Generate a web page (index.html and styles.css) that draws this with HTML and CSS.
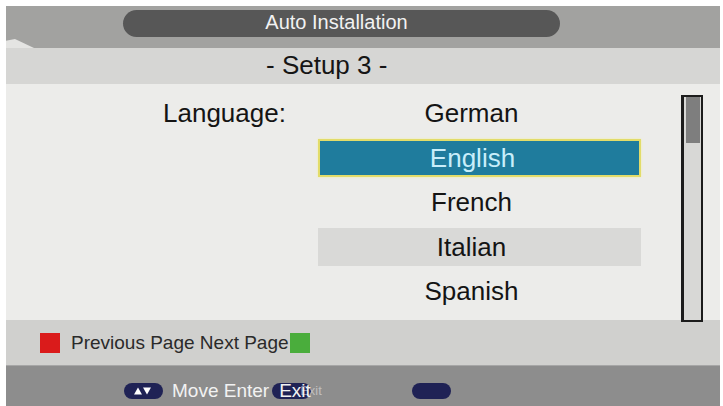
FILE: index.html
```html
<!DOCTYPE html>
<html lang="en">
<head>
<meta charset="utf-8">
<title>Auto Installation - Setup 3</title>
<link rel="stylesheet" href="styles.css">
</head>
<body>
<div class="screen">
  <header class="top">
    <span class="wedge"></span>
    <div class="title-pill">Auto Installation</div>
  </header>
  <div class="subhead">- Setup 3 -</div>
  <main class="content">
    <div class="label">Language:</div>
    <ul class="list">
      <li class="item">German</li>
      <li class="item sel">English</li>
      <li class="item">French</li>
      <li class="item alt">Italian</li>
      <li class="item">Spanish</li>
    </ul>
    <div class="scrollbar"><div class="thumb"></div></div>
  </main>
  <div class="pagebar">
    <span class="key red"></span>
    <span class="page-text">Previous Page Next Page</span>
    <span class="key green"></span>
  </div>
  <footer class="helpbar">
    <span class="btn">
      <svg class="arrows" width="39" height="16" viewBox="0 0 39 16">
        <polygon points="10,11.5 14,4.5 18,11.5" fill="#ffffff"/>
        <polygon points="19,4.5 27,4.5 23,11.5" fill="#ffffff"/>
      </svg>
    </span>
    <span class="help">Move Enter</span>
    <span class="exit">
      <span class="btn"></span>
      <span class="exit-text">Exit</span>
      <span class="ghost">Exit</span>
    </span>
    <span class="btn btn3"></span>
  </footer>
</div>
</body>
</html>
```

FILE: styles.css
```css
* { box-sizing: border-box; }

html, body {
  margin: 0;
  padding: 0;
  background: #ffffff;
}

body {
  font-family: "Liberation Sans", Arial, sans-serif;
}

.screen {
  width: 714px;
  height: 400px;
  margin: 6px 0 0 6px;
  display: flex;
  flex-direction: column;
  overflow: hidden;
}

/* header */
.top {
  position: relative;
  height: 42px;
  flex: none;
  background: #a2a2a0;
  padding: 4px 0 0 117px;
}

.wedge {
  position: absolute;
  left: 0;
  top: 33px;
  width: 28px;
  height: 9px;
  background: #e4e4e2;
  clip-path: polygon(0 20%, 32% 0, 100% 100%, 0 100%);
}

.title-pill {
  width: 437px;
  height: 27px;
  border-radius: 14px;
  background: #575757;
  color: #f2f2f2;
  font-size: 20px;
  line-height: 25px;
  text-align: center;
  padding-right: 10px;
}

/* sub header */
.subhead {
  height: 36px;
  flex: none;
  background: #d6d6d4;
  color: #151515;
  font-size: 26px;
  line-height: 34px;
  padding-left: 260px;
}

/* main */
.content {
  height: 236px;
  flex: none;
  background: #ececea;
  display: flex;
  align-items: flex-start;
  padding: 10px 0 0 157px;
}

.label {
  width: 155px;
  flex: none;
  font-size: 26px;
  line-height: 38px;
  color: #141414;
}

.list {
  list-style: none;
  margin: 0;
  padding: 0;
  width: 323px;
  flex: none;
  display: flex;
  flex-direction: column;
  gap: 6.5px;
}

.item {
  height: 38px;
  font-size: 26px;
  line-height: 38px;
  text-align: center;
  color: #141414;
  padding-right: 16px;
}

.item.sel {
  background: #1f7c9d;
  border: 2px solid #e2dc6a;
  box-shadow: 0 0 2px #f2eea0;
  color: #c8eefa;
  line-height: 34px;
  padding-right: 14px;
}

.item.alt {
  background: #d9d9d7;
}

.scrollbar {
  position: relative;
  z-index: 1;
  flex: none;
  width: 22px;
  height: 227px;
  margin: 1px 0 0 40px;
  border: 2px solid #1c1c1c;
  border-left-width: 3px;
  background: #d8d8d6;
  padding: 0 1px 0 2px;
}

.thumb {
  height: 46px;
  background: #7e7e7e;
}

/* page bar */
.pagebar {
  height: 45px;
  flex: none;
  background: #d0d0ce;
  display: flex;
  align-items: center;
  padding-left: 34px;
  font-size: 19px;
  color: #2a2a2a;
}

.key {
  width: 20px;
  height: 20px;
  flex: none;
}

.key.red { background: #da1b1b; }

.key.green {
  background: #4aad3c;
  margin-left: 1px;
}

.page-text { margin-left: 11px; }

/* help bar */
.helpbar {
  flex: 1;
  background: #8d8d8d;
  border-top: 1px solid #a6a6a6;
  display: flex;
  align-items: center;
  padding: 10px 0 0 118px;
}

.btn {
  width: 39px;
  height: 16px;
  flex: none;
  border-radius: 8px;
  background: #1f2255;
  display: block;
}

.arrows { display: block; }

.help {
  margin-left: 9px;
  font-size: 19px;
  line-height: 20px;
  color: #f2f2f2;
}

.exit {
  position: relative;
  margin-left: 3px;
  height: 16px;
}

.exit-text {
  position: absolute;
  left: 7px;
  top: -2px;
  font-size: 19px;
  line-height: 20px;
  color: #f2f2f2;
}

.ghost {
  position: absolute;
  left: 28px;
  top: 0;
  font-size: 13px;
  line-height: 16px;
  color: rgba(255, 255, 255, 0.45);
}

.btn3 { margin-left: 101px; }
```
